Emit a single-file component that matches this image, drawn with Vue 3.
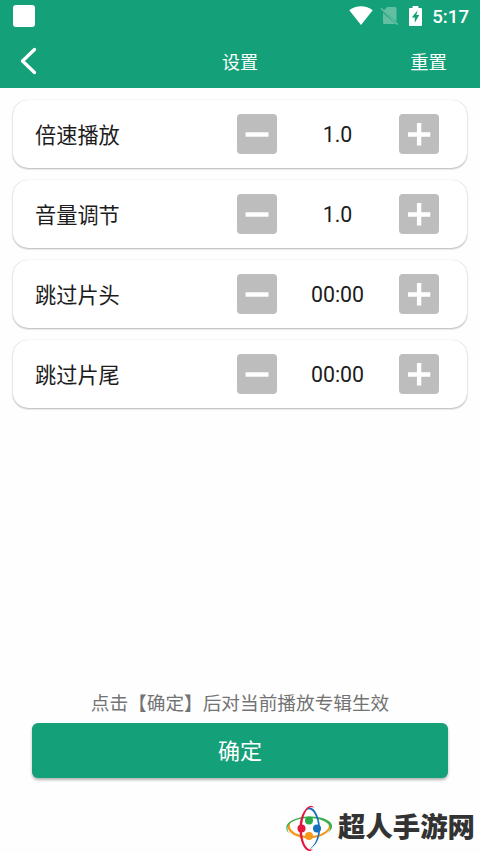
<template>
  <div class="settings-page">
    <header class="top">
      <div class="status-bar">
        <span class="status-app"></span>
        <div class="status-icons">
          <svg class="wifi" width="24" height="20" viewBox="0 0 24 20">
            <path d="M0.3 4.2C7-1.2 17-1.2 23.7 4.2L12 19Z" fill="#fff" />
          </svg>
          <svg class="sim" width="19" height="20" viewBox="0 0 19 20">
            <path d="M7.3 1h7.4q1.8 0 1.8 1.8v12.7L3.8 4.4Z" fill="#64bfa2" />
            <path d="M3 6.8L15.6 18H4.6Q3 18 3 16.4Z" fill="#64bfa2" />
            <path d="M1 2.2L17.8 18.6" stroke="#64bfa2" stroke-width="1.5" />
          </svg>
          <svg class="battery" width="13" height="20" viewBox="0 0 13 20">
            <path d="M3.6 0h5.8v2H12q1 0 1 1v16q0 1-1 1H1q-1 0-1-1V3q0-1 1-1h2.6Z" fill="#fff" />
            <path d="M8.6 4.2L2.8 11.400h3v5.400L10.300 9H7.300Z" fill="#14a078" />
          </svg>
          <span class="time">5:17</span>
        </div>
      </div>
      <nav class="nav-bar">
        <button class="nav-back" aria-label="返回">
          <svg width="18" height="28" viewBox="0 0 18 28">
            <path d="M14.500 2.500L2.500 14L14.500 25.500" fill="none" stroke="#fff" stroke-width="3.300" stroke-linecap="round" stroke-linejoin="round" />
          </svg>
        </button>
        <span class="nav-title">设置</span>
        <button class="nav-reset" @click="reset">重置</button>
      </nav>
    </header>

    <main class="card-list">
      <section v-for="(item, i) in items" :key="item.label" class="card">
        <span class="card-label">{{ item.label }}</span>
        <button class="step-btn" aria-label="减少" @click="change(i, -1)">
          <svg width="40" height="40" viewBox="0 0 40 40">
            <path d="M8.500 20.500H31.500" stroke="#fff" stroke-width="4.400" />
          </svg>
        </button>
        <span class="card-value">{{ format(item) }}</span>
        <button class="step-btn" aria-label="增加" @click="change(i, 1)">
          <svg width="40" height="40" viewBox="0 0 40 40">
            <path d="M9 20.500H31.300M20.100 9V31.500" stroke="#fff" stroke-width="4.400" />
          </svg>
        </button>
      </section>
    </main>

    <footer class="bottom">
      <p class="hint">点击【确定】后对当前播放专辑生效</p>
      <button class="confirm-btn">确定</button>
    </footer>

    <div class="brand">
      <svg class="brand-logo" width="48" height="50" viewBox="0 0 48 50">
        <path d="M7 17.500C-4 25 8 35.500 24 35.300C40 35 50 26 43 19C47 26 37 33 24 33C11 33 0 26 7 17.500Z" fill="#f39a1e" />
        <path d="M5 31C-3 22 9 15 24 15C39 15 51 23 42 30.500C55 21 41 13 24 13.500C6 14 -5 23 5 31Z" fill="#3aad4a" />
        <path d="M20 9C25 1 33 12 33.300 25C33.500 36 29 43 24 46.500C31 43 35.500 35 35 24C34 9 25-2 20 9Z" fill="#1670bd" />
        <path d="M29 5C26-2 15 8 14.500 24C14 41 22 53 28 46C22 49 16.500 39 17 25C17.500 10 24 1 29 5Z" fill="#e3173e" />
        <circle cx="24" cy="17.500" r="4" fill="#2daa4a" />
        <circle cx="16.500" cy="25.500" r="4" fill="#e3173e" />
        <circle cx="32" cy="25.400" r="4" fill="#1670bd" />
        <circle cx="24" cy="33" r="4" fill="#f39a1e" />
      </svg>
      <span class="brand-name">超人手游网</span>
    </div>
  </div>
</template>

<script setup>
import { ref } from 'vue'

const defaults = () => [
  { label: '倍速播放', type: 'rate', value: 1 },
  { label: '音量调节', type: 'rate', value: 1 },
  { label: '跳过片头', type: 'time', value: 0 },
  { label: '跳过片尾', type: 'time', value: 0 }
]

const items = ref(defaults())

const format = (item) => {
  if (item.type === 'rate') return item.value.toFixed(1)
  const min = String(Math.floor(item.value / 60)).padStart(2, '0')
  const sec = String(item.value % 60).padStart(2, '0')
  return `${min}:${sec}`
}

const change = (index, dir) => {
  const item = items.value[index]
  const step = item.type === 'rate' ? 0.1 : 1
  item.value = Math.max(0, item.value + dir * step)
}

const reset = () => {
  items.value = defaults()
}
</script>

<style>
body {
  margin: 0;
  background: #fefefe;
}
</style>

<style scoped>
.settings-page {
  display: flex;
  flex-direction: column;
  height: 853px;
  overflow: hidden;
  background: #fefefe;
  color: #1c1c1c;
  font-family: Roboto, "Noto Sans CJK SC", sans-serif;
}

button {
  padding: 0;
  border: none;
  background: none;
  color: inherit;
  font-family: inherit;
  cursor: pointer;
}

svg {
  display: block;
}

.top {
  height: 88px;
  background: #14a078;
  color: #fff;
}

.status-bar {
  display: flex;
  justify-content: space-between;
  height: 34px;
  padding: 0 11px 0 13px;
}

.status-app {
  width: 22px;
  height: 22px;
  margin-top: 5px;
  border-radius: 3px;
  background: #fff;
}

.status-icons {
  display: flex;
  align-items: flex-start;
  padding-top: 6px;
}

.sim {
  margin-left: 7.500px;
}

.battery {
  margin-left: 10px;
}

.time {
  margin-left: 10px;
  font-size: 18.67px;
  font-weight: 500;
  line-height: 22px;
}

.nav-bar {
  display: grid;
  grid-template-columns: 1fr auto 1fr;
  align-items: center;
  height: 54px;
  padding: 0 33px 0 20px;
}

.nav-title {
  margin: 0 0 1px 13px;
  font-size: 18px;
}

.nav-reset {
  justify-self: end;
  margin-bottom: 1px;
  font-size: 18.400px;
}

.card-list {
  display: flex;
  flex-direction: column;
  gap: 12px;
  padding: 12px 13px 0;
}

.card {
  display: flex;
  align-items: center;
  height: 68px;
  padding: 0 28.500px 0 22px;
  border-radius: 15px;
  background: #fff;
  box-shadow: 0 1px 2px rgba(0, 0, 0, 0.28), 0 0 1px rgba(0, 0, 0, 0.22);
}

.card-label {
  flex: 1;
  padding-bottom: 2px;
  font-size: 21.200px;
}

.step-btn {
  width: 40px;
  height: 40px;
  border-radius: 4px;
  background: #bdbdbd;
}

.card-value {
  width: 122px;
  font-size: 21.33px;
  text-align: center;
}

.bottom {
  margin-top: auto;
  padding: 0 32px;
}

.hint {
  margin: 0 0 5px;
  color: #737373;
  font-size: 18.67px;
  line-height: 28px;
  text-align: center;
}

.confirm-btn {
  display: block;
  width: 100%;
  height: 55px;
  padding-bottom: 3px;
  border-radius: 6px;
  background: #14a078;
  color: #fff;
  font-size: 22px;
  box-shadow: 0 2px 3px rgba(0, 0, 0, 0.3);
}

.brand {
  display: flex;
  align-items: center;
  align-self: flex-end;
  height: 50px;
  margin-top: 25px;
  padding-right: 5px;
}

.brand-logo {
  margin-right: 5px;
}

.brand-name {
  color: #333;
  font-size: 27.400px;
  font-weight: 900;
  line-height: 50px;
}
</style>
